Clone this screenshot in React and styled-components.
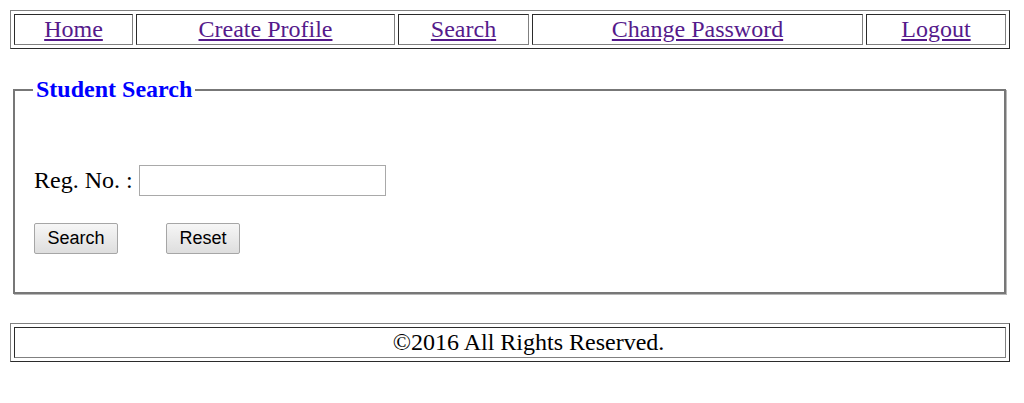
import styled, { createGlobalStyle } from "styled-components";

const GlobalStyle = createGlobalStyle`
  body {
    margin: 0;
    background: #ffffff;
    font-family: "Liberation Serif", "Times New Roman", serif;
    color: #000000;
  }
`;

const Page = styled.div`
  width: 1000px;
  padding: 10px;
`;

const FramedTable = styled.div`
  display: grid;
  grid-template-columns: ${(p) => p.$columns};
  gap: 3px;
  padding: 3px;
  border: 1px solid;
  border-color: #808080 #2b2b2b #2b2b2b #808080;
`;

const Cell = styled.div`
  height: 31px;
  box-sizing: border-box;
  border: 1px solid;
  border-color: #2b2b2b #808080 #808080 #2b2b2b;
  display: flex;
  align-items: center;
  justify-content: center;
  padding-left: ${(p) => p.$indent || 0}px;
  font-size: 24px;
  line-height: 27px;
`;

const NavLink = styled.a`
  color: #551a8b;
  text-decoration: underline;
  cursor: pointer;
`;

const SearchBox = styled.fieldset`
  margin: 27px 4px 29px 3px;
  padding: 62px 19px 38px 19px;
  border: 2px solid #777777;
  box-shadow: 1px 1px 0 #b8b8b8;
`;

const Legend = styled.legend`
  padding: 0 3px;
  margin-left: -1px;
  color: #0000ff;
  font-weight: bold;
  font-size: 24px;
`;

const FieldRow = styled.div`
  display: flex;
  align-items: center;
  font-size: 24px;
`;

const Label = styled.label`
  margin-right: 6px;
`;

const TextInput = styled.input`
  width: 247px;
  height: 31px;
  box-sizing: border-box;
  border: 1px solid #a9a9a9;
  padding: 2px 4px;
  font-size: 16px;
  outline: none;
`;

const ButtonRow = styled.div`
  display: flex;
  gap: 48px;
  margin-top: 27px;
`;

const Button = styled.button`
  width: ${(p) => p.$width}px;
  height: 31px;
  box-sizing: border-box;
  padding: 0;
  border: 1px solid #a6a6a6;
  border-radius: 2px;
  background: linear-gradient(#f6f6f6, #dedede);
  font-family: "Liberation Sans", Arial, sans-serif;
  font-size: 18px;
  color: #000000;
`;

const navItems = [
  "Home",
  "Create Profile",
  "Search",
  "Change Password",
  "Logout",
];

export default function App() {
  return (
    <Page>
      <GlobalStyle />
      <FramedTable $columns="119px 259px 131px 331px 140px">
        {navItems.map((item) => (
          <Cell key={item}>
            <NavLink href="#">{item}</NavLink>
          </Cell>
        ))}
      </FramedTable>

      <SearchBox>
        <Legend>Student Search</Legend>
        <FieldRow>
          <Label>Reg. No. :</Label>
          <TextInput type="text" />
        </FieldRow>
        <ButtonRow>
          <Button $width={84}>Search</Button>
          <Button $width={74}>Reset</Button>
        </ButtonRow>
      </SearchBox>

      <FramedTable $columns="1fr">
        <Cell $indent={37}>©2016 All Rights Reserved.</Cell>
      </FramedTable>
    </Page>
  );
}
